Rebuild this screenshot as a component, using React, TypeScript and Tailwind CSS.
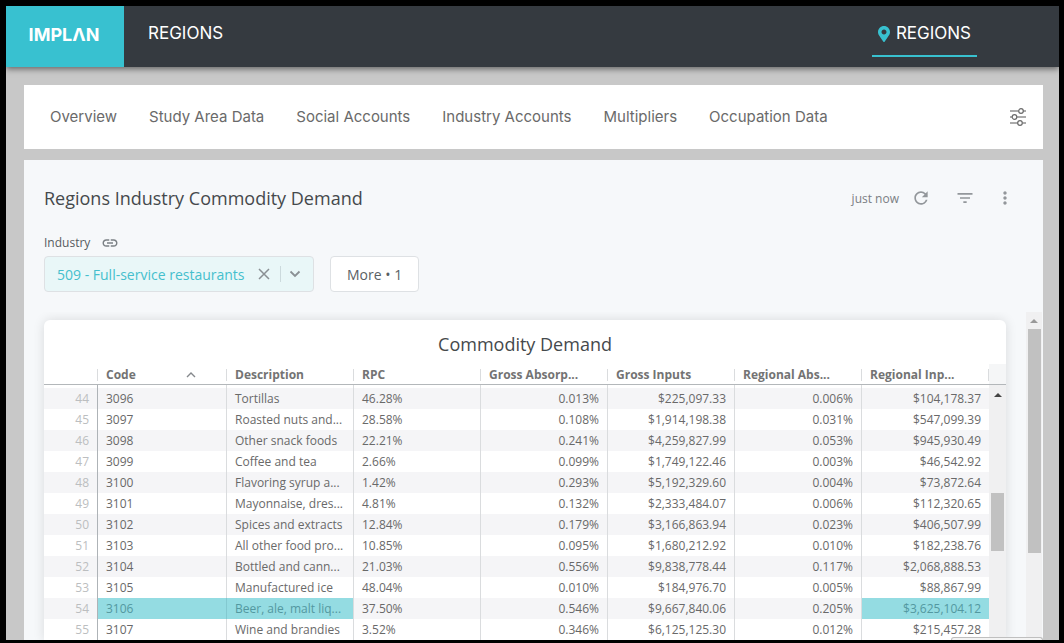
import React from "react";
import { FaMapMarkerAlt } from "react-icons/fa";
import { MdLink, MdRefresh, MdFilterList, MdMoreVert } from "react-icons/md";

const tabs = [
  "Overview",
  "Study Area Data",
  "Social Accounts",
  "Industry Accounts",
  "Multipliers",
  "Occupation Data",
];

const columns = ["Code", "Description", "RPC", "Gross Absorp...", "Gross Inputs", "Regional Abs...", "Regional Inp..."];

const rows: string[][] = [
  ["44", "3096", "Tortillas", "46.28%", "0.013%", "$225,097.33", "0.006%", "$104,178.37"],
  ["45", "3097", "Roasted nuts and...", "28.58%", "0.108%", "$1,914,198.38", "0.031%", "$547,099.39"],
  ["46", "3098", "Other snack foods", "22.21%", "0.241%", "$4,259,827.99", "0.053%", "$945,930.49"],
  ["47", "3099", "Coffee and tea", "2.66%", "0.099%", "$1,749,122.46", "0.003%", "$46,542.92"],
  ["48", "3100", "Flavoring syrup a...", "1.42%", "0.293%", "$5,192,329.60", "0.004%", "$73,872.64"],
  ["49", "3101", "Mayonnaise, dres...", "4.81%", "0.132%", "$2,333,484.07", "0.006%", "$112,320.65"],
  ["50", "3102", "Spices and extracts", "12.84%", "0.179%", "$3,166,863.94", "0.023%", "$406,507.99"],
  ["51", "3103", "All other food pro...", "10.85%", "0.095%", "$1,680,212.92", "0.010%", "$182,238.76"],
  ["52", "3104", "Bottled and cann...", "21.03%", "0.556%", "$9,838,778.44", "0.117%", "$2,068,888.53"],
  ["53", "3105", "Manufactured ice", "48.04%", "0.010%", "$184,976.70", "0.005%", "$88,867.99"],
  ["54", "3106", "Beer, ale, malt liq...", "37.50%", "0.546%", "$9,667,840.06", "0.205%", "$3,625,104.12"],
  ["55", "3107", "Wine and brandies", "3.52%", "0.346%", "$6,125,125.30", "0.012%", "$215,457.28"],
];

const highlightedRow = "54";
const highlightedColumns = [1, 2, 7];

function Header() {
  return (
    <header className="relative z-10 flex h-[61px] shrink-0 items-stretch bg-[#353a40] font-['Inter',sans-serif] text-[17px] text-white shadow-[0_2px_6px_rgba(0,0,0,0.5)]">
      <a href="#" className="flex w-[118px] items-center justify-center bg-[#38c1d0] pr-0.5 pb-1 text-lg font-bold">
        IMPLΛN
      </a>
      <h1 className="flex items-center pb-1.5 pl-6 font-normal">REGIONS</h1>
      <a
        href="#"
        className="mr-[82px] mb-2.5 ml-auto flex items-center gap-1.5 border-b-2 border-[#38c1d0] px-1.5 pt-1.5"
      >
        <FaMapMarkerAlt className="h-4 w-3 text-[#38c1d0]" />
        REGIONS
      </a>
    </header>
  );
}

function TabBar() {
  return (
    <nav className="flex h-16 shrink-0 items-center justify-between bg-white pr-4 pl-[26px] font-['Inter',sans-serif]">
      <div className="flex gap-8 text-[15px] text-[#6a6a6a]">
        {tabs.map((tab) => (
          <a key={tab} href="#">
            {tab}
          </a>
        ))}
      </div>
      <button type="button" aria-label="Settings">
        <svg viewBox="0 0 18 18" className="size-[18px]" fill="none" stroke="#6b6b6b">
          <path d="M1 3h8.5M14 3h3M1 9h2M8 9h9M1 15h8M13.500 15H17" stroke="#909090" strokeWidth="1.500" />
          <circle cx="12" cy="3" r="2.300" strokeWidth="1.200" />
          <circle cx="5.500" cy="9" r="2.300" strokeWidth="1.200" />
          <circle cx="11" cy="15" r="2.300" strokeWidth="1.200" />
        </svg>
      </button>
    </nav>
  );
}

function DataTable() {
  return (
    <table className="w-full table-fixed border-separate border-spacing-0 text-xs leading-5 text-[#696969]">
      <colgroup>
        <col className="w-[54px]" />
        <col className="w-[129px]" />
        <col />
        <col />
        <col />
        <col />
        <col />
        <col />
      </colgroup>
      <thead>
        <tr className="text-left text-[#737373]">
          <th aria-label="Row" className="h-[21px] border-b border-[#b3b7ba] px-0 pt-0.5 pb-0">
            <div className="h-3 border-r border-[#dadcde]" />
          </th>
          {columns.map((column) => (
            <th key={column} className="h-[21px] border-b border-[#b3b7ba] px-0 pt-0.5 pb-0 font-bold">
              <div className="flex h-3 items-center justify-between border-r border-[#dadcde] pr-[30px] pl-2 whitespace-nowrap">
                {column}
                {column === "Code" && (
                  <svg viewBox="0 0 10 6" className="h-1.5 w-2.5" fill="none" stroke="#85888c" strokeWidth="1.400">
                    <path d="M1 5l4-4 4 4" />
                  </svg>
                )}
              </div>
            </th>
          ))}
        </tr>
      </thead>
      <tbody>
        <tr aria-hidden="true">
          {["n", ...columns].map((column, i) => (
            <td key={column} className={`h-[3px] border-r p-0 ${i === 0 ? "border-[#aeb3b7]" : i === 7 ? "border-white" : "border-[#dadcde]"}`} />
          ))}
        </tr>
        {rows.map((row, r) => (
          <tr key={row[0]} className={r % 2 === 0 ? "bg-[#f5f5f7]" : "bg-white"}>
            {row.map((cell, i) => {
              const lit = row[0] === highlightedRow && highlightedColumns.includes(i);
              const align = i === 0 || i > 3 ? "text-right" : "text-left";
              const edge =
                i === 7
                  ? "border-r-0"
                  : i === 0
                    ? "border-r border-[#aeb3b7]"
                    : lit && i === 1
                      ? "border-r border-[#83c9d0]"
                      : "border-r border-[#dadcde]";
              const tone = lit ? "bg-[#94dce2] text-[#5398a0]" : i === 0 ? "text-[#bcbec0]" : "";
              return (
                <td key={i} className={`h-[21px] px-2 py-0 whitespace-nowrap ${align} ${edge} ${tone}`}>
                  {cell}
                </td>
              );
            })}
          </tr>
        ))}
      </tbody>
    </table>
  );
}

function FilterBar() {
  return (
    <div className="flex gap-4 px-5 text-sm">
      <div className="flex h-9 w-[270px] items-center rounded border border-[#dee1e4] bg-[#e9f7f8] pl-3 text-[#8a9094]">
        <select id="industry" className="w-[188px] appearance-none bg-transparent pt-0.5 text-[#45bfcd] outline-none">
          <option>509 - Full-service restaurants</option>
        </select>
        <button type="button" aria-label="Clear" className="ml-[13px]">
          <svg viewBox="0 0 12 12" className="size-3" fill="none" stroke="currentColor" strokeWidth="1.500">
            <path d="M1 1l10 10M11 1L1 11" />
          </svg>
        </button>
        <span className="ml-2.5 h-4 border-l border-[#ccdadd]" />
        <button type="button" aria-label="Open list" className="ml-2">
          <svg viewBox="0 0 12 8" className="h-2 w-3" fill="none" stroke="currentColor" strokeWidth="1.800">
            <path d="M1.500 1.500L6 6l4.500-4.500" />
          </svg>
        </button>
      </div>
      <button type="button" className="h-9 rounded border border-[#dee1e4] bg-white px-4 pt-0.5 text-[#5a5f64]">
        More • 1
      </button>
    </div>
  );
}

function Dashboard() {
  return (
    <main className="flex min-h-0 flex-1 flex-col bg-[#f6f8fa] font-['Open_Sans',sans-serif]">
      <div className="flex items-center justify-between pt-6 pr-7 pl-5">
        <h2 className="text-lg text-[#45494c]">Regions Industry Commodity Demand</h2>
        <div className="flex items-center text-[#93979b]">
          <span className="mr-3 pt-0.5 text-xs text-[#7a7e83]">just now</span>
          <button type="button" aria-label="Refresh">
            <MdRefresh className="size-5" />
          </button>
          <button type="button" aria-label="Filters" className="ml-6">
            <MdFilterList className="size-5" />
          </button>
          <button type="button" aria-label="More options" className="ml-5">
            <MdMoreVert className="size-5" />
          </button>
        </div>
      </div>
      <div className="flex items-center gap-[11px] pt-[21px] pb-[3px] pl-5 text-xs leading-5 text-[#565b61]">
        <label htmlFor="industry">Industry</label>
        <MdLink className="size-[18px] text-[#7b8085]" />
      </div>
      <FilterBar />
      <div className="mt-5 flex min-h-0 flex-1 overflow-hidden pl-5">
        <section className="mt-2 flex min-w-0 flex-1 flex-col rounded-t-md bg-white shadow-[0_0_12px_rgba(0,0,0,0.12)]">
          <h3 className="h-11 pt-2.5 text-center text-lg text-[#45494c]">Commodity Demand</h3>
          <div className="flex min-h-0 flex-1">
            <div className="min-w-0 flex-1 overflow-hidden">
              <DataTable />
            </div>
            <div className="flex w-[17px] flex-col">
              <div className="h-[21px] border-b border-[#b3b7ba] bg-[#f5f6f7]" />
              <div className="flex flex-1 flex-col items-center bg-[#f0f0f1]">
                <svg viewBox="0 0 8 4" className="mt-2 mb-24 h-1 w-2" fill="#444">
                  <path d="M4 0l4 4H0z" />
                </svg>
                <div className="h-[58px] w-[13px] bg-[#c1c1c1]" />
              </div>
            </div>
          </div>
        </section>
        <div className="mr-px ml-5 flex w-4 flex-col items-center bg-[#f0f0f1]">
          <svg viewBox="0 0 8 4" className="mt-[7px] mb-1.5 h-1 w-2" fill="#999">
            <path d="M4 0l4 4H0z" />
          </svg>
          <div className="h-56 w-[13px] bg-[#c1c1c1]" />
        </div>
      </div>
    </main>
  );
}

export default function App() {
  return (
    <div className="h-screen overflow-hidden bg-black pt-1.5 pr-[5px] pb-[3px] pl-1.5">
      <div className="relative flex h-full flex-col overflow-hidden bg-[#c8c8c8]">
        <Header />
        <div className="flex min-h-0 flex-1 flex-col gap-[11px] pt-[18px] pr-4 pl-[18px]">
          <TabBar />
          <Dashboard />
        </div>
        <div className="absolute right-4 bottom-0 h-[3px] w-[92px] rounded-t border border-b-0 border-[#bfbfbf] bg-[#f4f4f4]" />
      </div>
    </div>
  );
}
